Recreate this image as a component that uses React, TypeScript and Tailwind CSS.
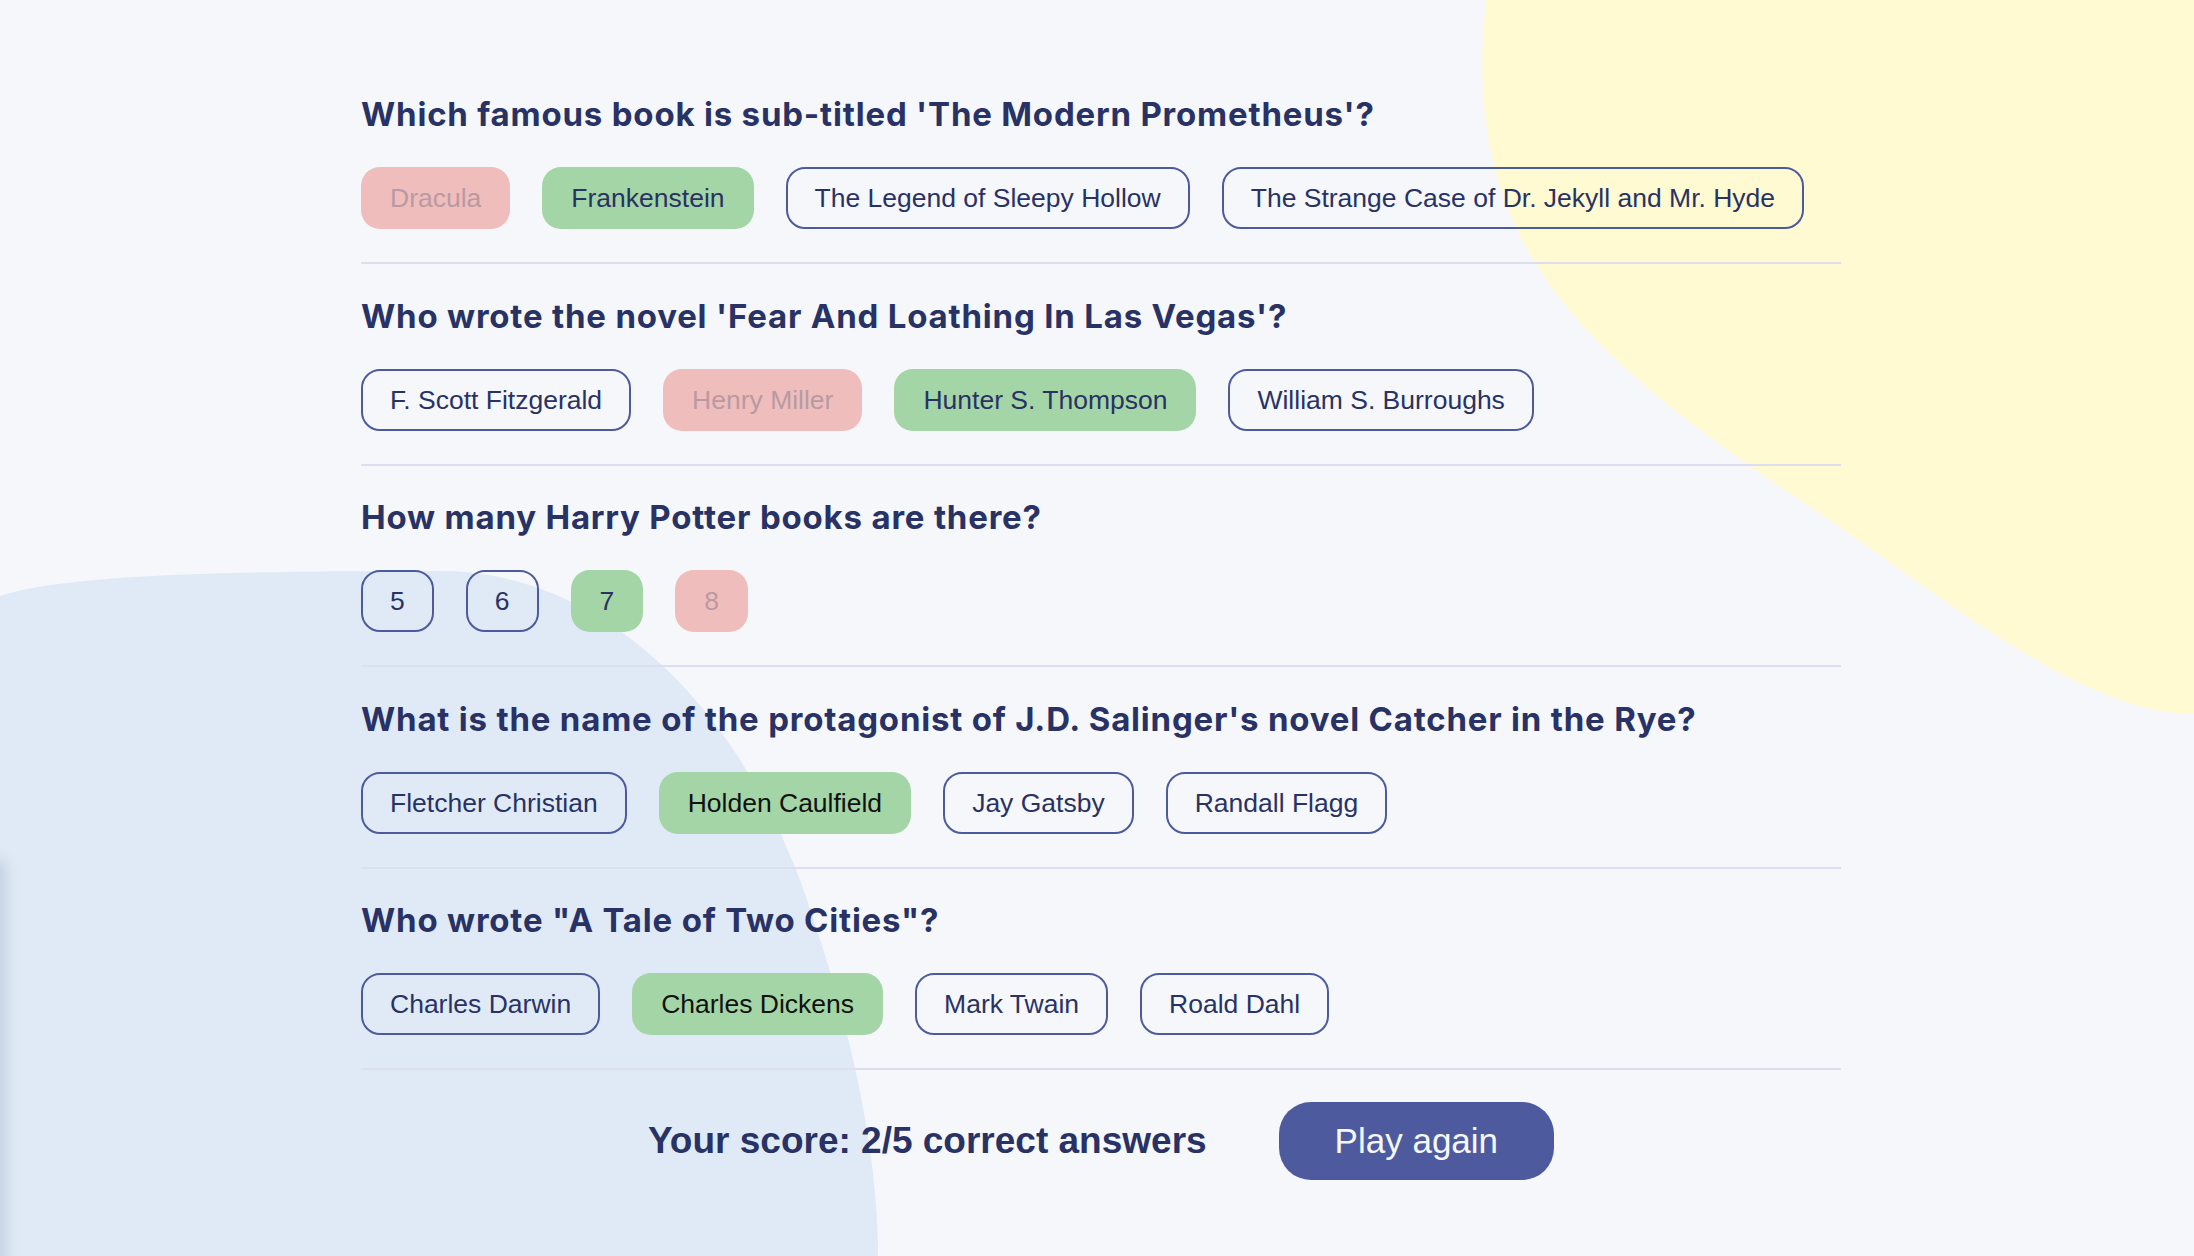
import React from "react";

type Kind = "plain" | "wrong" | "right" | "rightPicked";
type Q = { q: string; answers: [string, Kind][] };

const questions: Q[] = [
  {
    q: "Which famous book is sub-titled 'The Modern Prometheus'?",
    answers: [
      ["Dracula", "wrong"],
      ["Frankenstein", "right"],
      ["The Legend of Sleepy Hollow", "plain"],
      ["The Strange Case of Dr. Jekyll and Mr. Hyde", "plain"],
    ],
  },
  {
    q: "Who wrote the novel 'Fear And Loathing In Las Vegas'?",
    answers: [
      ["F. Scott Fitzgerald", "plain"],
      ["Henry Miller", "wrong"],
      ["Hunter S. Thompson", "right"],
      ["William S. Burroughs", "plain"],
    ],
  },
  {
    q: "How many Harry Potter books are there?",
    answers: [
      ["5", "plain"],
      ["6", "plain"],
      ["7", "right"],
      ["8", "wrong"],
    ],
  },
  {
    q: "What is the name of the protagonist of J.D. Salinger's novel Catcher in the Rye?",
    answers: [
      ["Fletcher Christian", "plain"],
      ["Holden Caulfield", "rightPicked"],
      ["Jay Gatsby", "plain"],
      ["Randall Flagg", "plain"],
    ],
  },
  {
    q: 'Who wrote "A Tale of Two Cities"?',
    answers: [
      ["Charles Darwin", "plain"],
      ["Charles Dickens", "rightPicked"],
      ["Mark Twain", "plain"],
      ["Roald Dahl", "plain"],
    ],
  },
];

function Answer({ label, kind }: { label: string; kind: Kind }) {
  const base =
    "border-2 rounded-[19px] px-[27px] py-[13px] leading-[32px] text-[26.5px] whitespace-nowrap font-['Liberation_Sans',Arial,sans-serif]";
  if (kind === "wrong")
    return (
      <div className={`${base} border-transparent bg-[#f0bdbd] text-[#b99aa2]`}>
        {label}
      </div>
    );
  if (kind === "right")
    return (
      <div className={`${base} border-transparent bg-[#a4d5a6] text-[#293264]`}>
        {label}
      </div>
    );
  if (kind === "rightPicked")
    return (
      <div className={`${base} border-transparent bg-[#a4d5a6] text-[#111111]`}>
        {label}
      </div>
    );
  return (
    <div className={`${base} border-[#4d5b9e] text-[#293264]`}>{label}</div>
  );
}

export default function App() {
  return (
    <div className="relative w-full h-[1256px] overflow-hidden bg-[#f5f7fb]">
      <svg
        className="absolute inset-0 w-full h-full pointer-events-none"
        viewBox="0 0 2194 1256"
        preserveAspectRatio="none"
      >
        <defs>
          <filter id="soft" x="-2" y="-1" width="5" height="3">
            <feGaussianBlur stdDeviation="7" />
          </filter>
        </defs>
        <path
          d="M1486,0 C1462,230 1560,340 1800,500 C1950,600 2080,714 2194,714 L2194,0 Z"
          fill="#fffad1"
        />
        <path
          d="M0,596 C60,576 200,571 440,571 C595,571 730,695 800,880 C850,1020 878,1150 878,1256 L0,1256 Z"
          fill="#e0eaf6"
        />
        <rect
          x="-14"
          y="860"
          width="20"
          height="440"
          fill="#c3d0e1"
          filter="url(#soft)"
        />
      </svg>

      <div className="relative ml-[361px] w-[1480px] pt-[95px]">
        {questions.map((item, i) => (
          <div key={i} className={i === 0 ? "" : "pt-[32.5px]"}>
            <h2 className="font-['Inter',sans-serif] font-bold text-[33px] tracking-[0.8px] leading-[38px] text-[#293264]">
              {item.q}
            </h2>
            <div className="mt-[34px] flex gap-[32px]">
              {item.answers.map(([label, kind]) => (
                <Answer key={label} label={label} kind={kind} />
              ))}
            </div>
            <div className="mt-[33px] h-[2px] bg-[#dcdff0]" />
          </div>
        ))}

        <div className="mt-[32px] flex items-center justify-center gap-[72px]">
          <span className="font-['Liberation_Sans',Arial,sans-serif] font-bold text-[37px] text-[#293264]">
            Your score: 2/5 correct answers
          </span>
          <button className="rounded-[32px] bg-[#4d5b9e] px-[56px] py-[19px] leading-[40px] text-[35px] text-[#f5f7fb] font-['Liberation_Sans',Arial,sans-serif]">
            Play again
          </button>
        </div>
      </div>
    </div>
  );
}
